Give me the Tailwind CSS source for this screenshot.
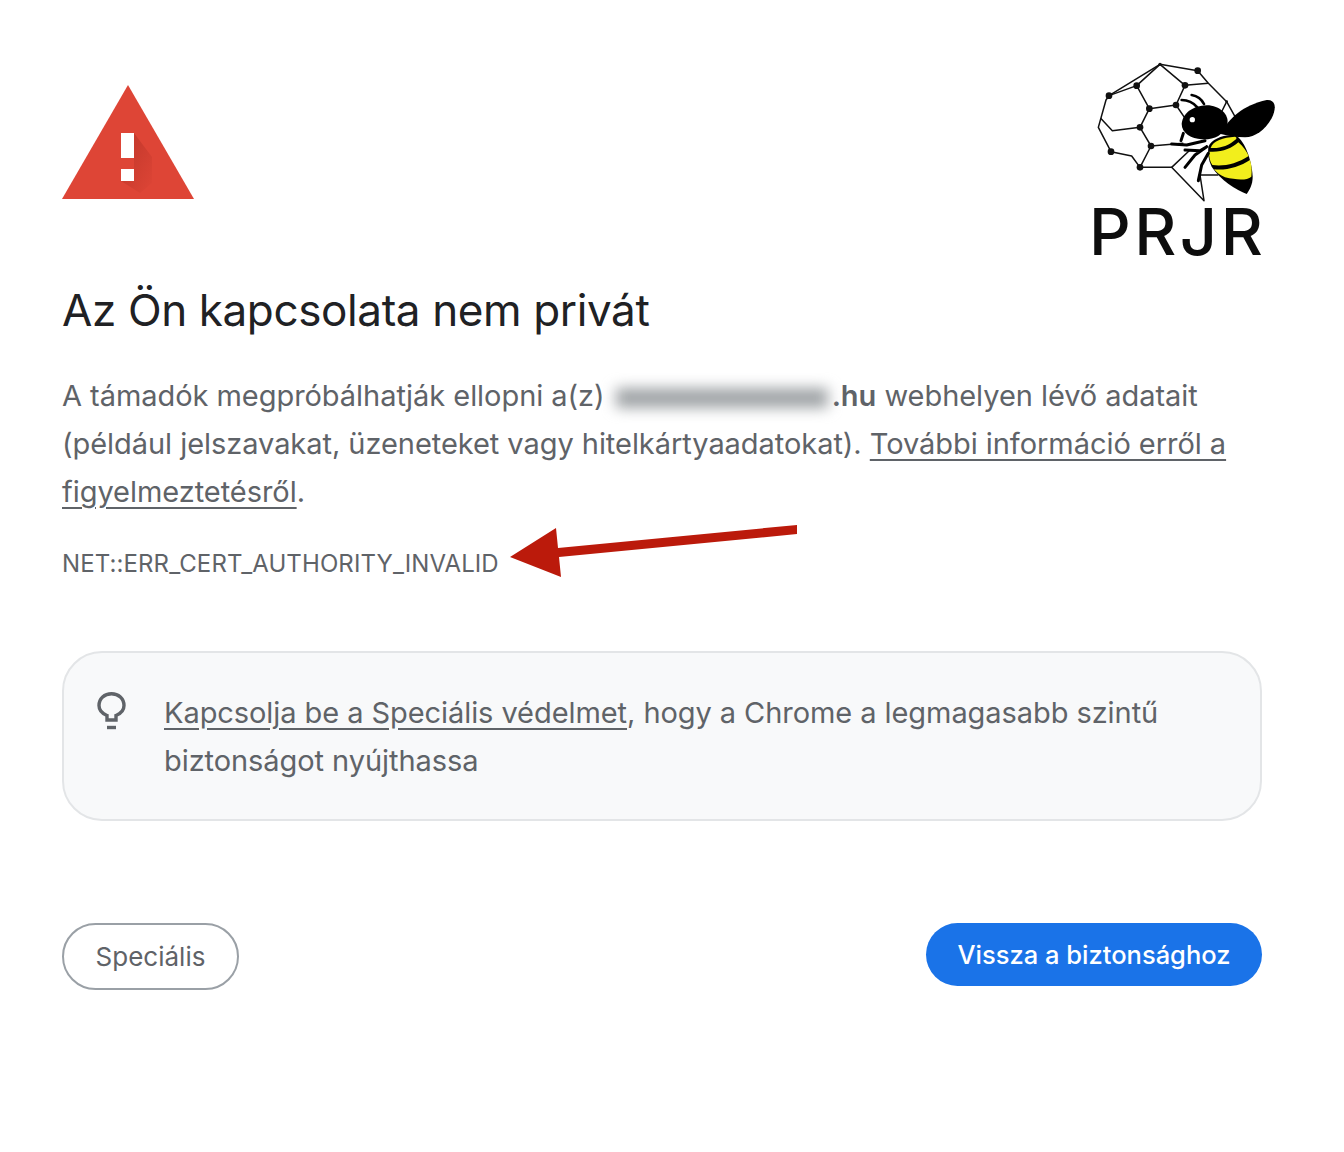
<!DOCTYPE html>
<html lang="hu">
<head>
    <meta charset="UTF-8">
    <meta name="viewport" content="width=device-width, initial-scale=1.0">
    <title>Az Ön kapcsolata nem privát</title>
    <script src="https://cdn.jsdelivr.net/npm/@tailwindcss/browser@4"></script>
</head>
<body class="bg-white font-['Inter','Liberation_Sans',sans-serif] text-[#5f6368]">
    <div class="relative w-[1344px] h-[1152px] overflow-hidden pl-[62px] pr-[82px] pt-[85px]">
        <!-- top row: warning icon and logo -->
        <div class="flex justify-between items-start h-[114px]">
            <svg width="132" height="114" viewBox="0 0 132 114">
                <defs>
                    <linearGradient id="fade" x1="0" y1="0" x2="1" y2="1">
                        <stop offset="0" stop-color="#a52a20" stop-opacity="0.55"/>
                        <stop offset="1" stop-color="#a52a20" stop-opacity="0"/>
                    </linearGradient>
                </defs>
                <path d="M66 0 L132 114 H0 Z" fill="#de4536"/>
                <path d="M72 48 L90 72 V98 L78 108 L59 96 V84 L72 84 Z" fill="url(#fade)"/>
                <rect x="59" y="48" width="13" height="25" fill="#fff"/>
                <rect x="59" y="84" width="13" height="12" fill="#fff"/>
            </svg>
            <div class="w-[210px] h-[220px] -mt-[35px] -mr-[28px] shrink-0">
                <svg width="210" height="220" viewBox="0 0 630 660">
                    <g fill="none" stroke="#111" stroke-width="4.5" stroke-linejoin="round">
                        <path d="M87 137 L240 43 L353 62 L385 100 L440 155 L468 205"/>
                        <path d="M87 137 L78 150 L55 232 L93 305 L155 318 L180 352 L275 352 L372 452 L360 375 L415 375"/>
                        <path d="M240 43 L315 106 L288 165 L208 176 L170 107 L87 137"/>
                        <path d="M240 43 L170 107 M315 106 L385 100 M288 165 L322 215 M208 176 L180 232 L213 288 L310 280 M180 232 L97 242 L62 205 M213 288 L180 352 M275 352 L330 300 M440 155 L420 195"/>
                    </g>
                    <g fill="#111">
                        <circle cx="240" cy="43" r="5"/><circle cx="353" cy="62" r="10"/><circle cx="170" cy="107" r="10"/>
                        <circle cx="315" cy="106" r="10"/><circle cx="87" cy="137" r="10"/><circle cx="208" cy="176" r="10"/>
                        <circle cx="288" cy="165" r="10"/><circle cx="180" cy="232" r="10"/><circle cx="213" cy="288" r="10"/>
                        <circle cx="93" cy="305" r="10"/><circle cx="180" cy="352" r="10"/><circle cx="440" cy="155" r="4"/>
                    </g>
                    <!-- bee -->
                    <path d="M422 252 C445 205 490 165 560 150 C585 148 592 170 575 205 C555 240 525 262 495 262 C470 262 445 258 422 252 Z" fill="#000"/>
                    <path d="M385 290 C395 265 440 250 470 258 C495 275 515 330 518 380 C518 405 508 420 500 432 C470 420 420 390 395 350 C385 330 383 310 385 290 Z" fill="#000"/>
                    <path d="M392 294 C398 272 430 262 465 260 C470 262 470 264 468 268 C445 288 420 296 392 294 Z" fill="#f2ee1c"/>
                    <path d="M388 305 C425 308 455 295 475 277 C490 290 500 305 506 318 C470 342 430 350 397 345 C390 335 386 320 388 305 Z" fill="#f2ee1c"/>
                    <path d="M402 358 C440 362 480 350 510 330 C515 345 516 365 514 380 C500 392 470 390 435 382 C420 375 410 368 402 358 Z" fill="#f2ee1c"/>
                    <path d="M305 222 C308 188 340 168 380 166 C420 166 448 195 442 222 C430 258 400 270 365 268 C335 266 305 250 305 222 Z" fill="#000"/>
                    <circle cx="337" cy="209" r="8" fill="#fff"/>
                    <path d="M305 150 C325 150 340 158 352 172 M335 135 C352 138 365 148 372 162" fill="none" stroke="#000" stroke-width="8" stroke-linecap="round"/>
                    <path d="M310 250 L303 272 M275 282 L320 285 L375 272 M315 300 L360 302 L380 290 M315 352 L345 315 L380 290 M355 392 L365 345 L385 310" fill="none" stroke="#000" stroke-width="9" stroke-linejoin="round" stroke-linecap="round"/>
                </svg>
                <p class="-mt-[78px] ml-[9px] text-[65px] leading-[80px] font-medium text-[#0d0d0d] tracking-[3.5px] whitespace-nowrap">PRJR</p>
            </div>
        </div>

        <h1 class="mt-[79px] text-[44px] leading-[64px] font-normal text-[#202124] tracking-[-0.38px]">Az Ön kapcsolata nem privát</h1>

        <p class="mt-[30px] text-[29px] leading-[48px] tracking-[-0.05px] w-[1190px]">A támadók megpróbálhatják ellopni a(z) <span class="inline-block relative w-[219px] h-[32px] align-middle"><span class="absolute left-[3px] right-[4px] top-[6px] h-[20px] bg-[#a0a4a7] blur-[7px]"></span></span><b class="font-semibold">.hu</b> webhelyen lévő adatait (például jelszavakat, üzeneteket vagy hitelkártyaadatokat). <a class="underline underline-offset-[5px]">További információ erről a figyelmeztetésről</a>.</p>

        <p class="mt-[32px] text-[24px] leading-[32px] tracking-[0.1px]">NET::ERR_CERT_AUTHORITY_INVALID</p>

        <!-- enhanced protection callout -->
        <div class="mt-[71px] flex w-[1200px] h-[170px] bg-[#f8f9fa] border-2 border-[#e3e5e7] rounded-[40px] pl-[33px] pr-[60px] pt-[36px]">
            <svg class="shrink-0 mt-[3px]" width="30" height="38" viewBox="0 0 30 38" fill="none" stroke="#5f6368" stroke-width="3.4">
                <path d="M10 28 V23.5 C5 21.5 2 17.5 2 13.5 C2 6.5 7.5 1.7 14.5 1.7 C21.5 1.7 27 6.5 27 13.5 C27 17.5 24 21.5 19 23.5 V28 Z"/>
                <path d="M10 35.5 H19"/>
            </svg>
            <p class="ml-[37px] text-[29px] leading-[48px] tracking-[-0.07px]"><a class="underline underline-offset-[5px]">Kapcsolja be a Speciális védelmet</a>, hogy a Chrome a legmagasabb szintű biztonságot nyújthassa</p>
        </div>

        <!-- buttons -->
        <div class="mt-[102px] flex justify-between items-start w-[1200px]">
            <button class="w-[177px] h-[67px] rounded-full border-2 border-[#9aa0a6] bg-white text-[26px] text-[#5f6368]">Speciális</button>
            <button class="w-[336px] h-[63px] pt-[1px] rounded-full bg-[#1a73e8] text-[25.5px] text-white font-medium">Vissza a biztonsághoz</button>
        </div>

        <!-- annotation arrow -->
        <svg class="absolute left-[500px] top-[515px]" width="310" height="70" viewBox="500 515 310 70">
            <path d="M510 557 L556 528 L558 548 L797 525 L797 534 L559 557 L561 577 Z" fill="#bb1a0b"/>
        </svg>
    </div>
</body>
</html>
